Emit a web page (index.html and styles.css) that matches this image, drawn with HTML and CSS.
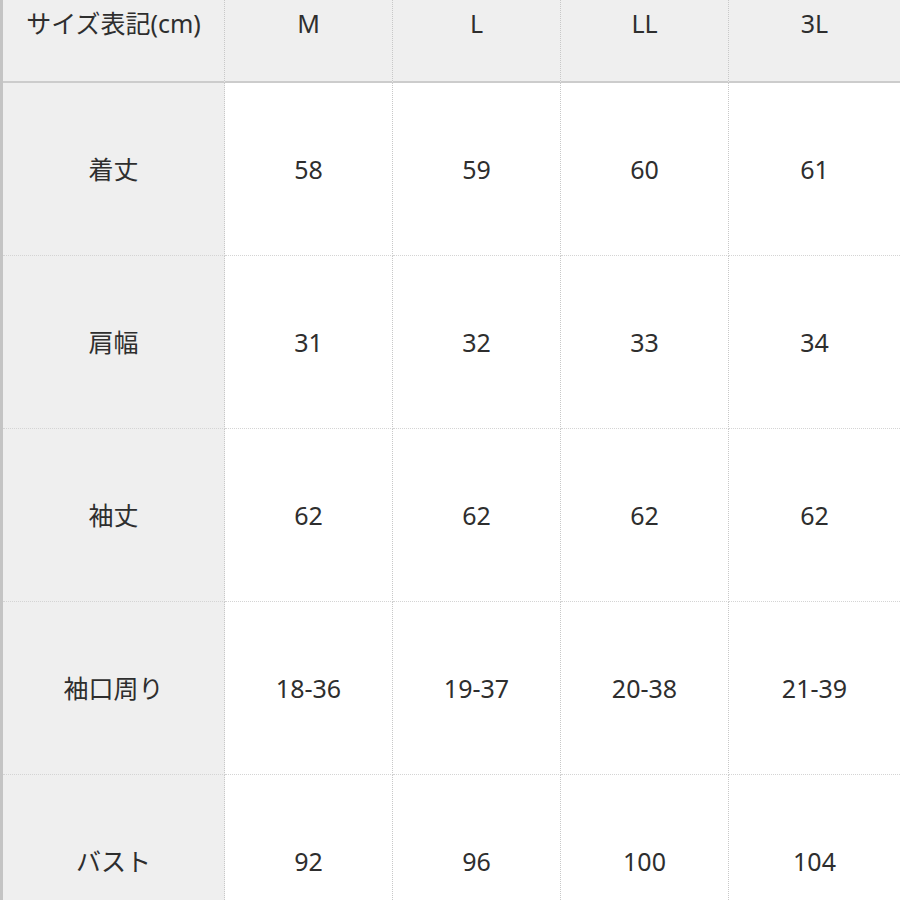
FILE: index.html
```html
<!DOCTYPE html>
<html lang="ja">
<head>
<meta charset="utf-8">
<link rel="stylesheet" href="styles.css">
</head>
<body>
<div class="table">
  <div class="cell head label">サイズ表記(cm)</div>
  <div class="cell head">M</div>
  <div class="cell head">L</div>
  <div class="cell head">LL</div>
  <div class="cell head last">3L</div>

  <div class="cell label">着丈</div>
  <div class="cell">58</div>
  <div class="cell">59</div>
  <div class="cell">60</div>
  <div class="cell last">61</div>

  <div class="cell label">肩幅</div>
  <div class="cell">31</div>
  <div class="cell">32</div>
  <div class="cell">33</div>
  <div class="cell last">34</div>

  <div class="cell label">袖丈</div>
  <div class="cell">62</div>
  <div class="cell">62</div>
  <div class="cell">62</div>
  <div class="cell last">62</div>

  <div class="cell label">袖口周り</div>
  <div class="cell">18-36</div>
  <div class="cell">19-37</div>
  <div class="cell">20-38</div>
  <div class="cell last">21-39</div>

  <div class="cell label">バスト</div>
  <div class="cell">92</div>
  <div class="cell">96</div>
  <div class="cell">100</div>
  <div class="cell last">104</div>
</div>
</body>
</html>
```

FILE: styles.css
```css
html, body {
  margin: 0;
  padding: 0;
  background: #ffffff;
}

body {
  width: 900px;
  height: 900px;
  overflow: hidden;
  font-family: "Noto Sans", "Noto Sans CJK JP", sans-serif;
  font-size: 25px;
  color: #2e2e2e;
}

.table {
  display: grid;
  grid-template-columns: 222px 168px 168px 168px 171px;
  grid-template-rows: 83px repeat(5, 173px);
  border-left: 3px solid #c4c4c4;
}

.cell {
  display: flex;
  align-items: center;
  justify-content: center;
  background: #ffffff;
  border-right: 1px dotted #c8c8c8;
  border-bottom: 1px dotted #d4d4d4;
  line-height: 1.4;
}

.cell.last {
  border-right: none;
}

.label {
  background: #efefef;
}

.head {
  background: #efefef;
  align-items: flex-start;
  padding-top: 6px;
  border-bottom: 2px solid #cccccc;
}
```
